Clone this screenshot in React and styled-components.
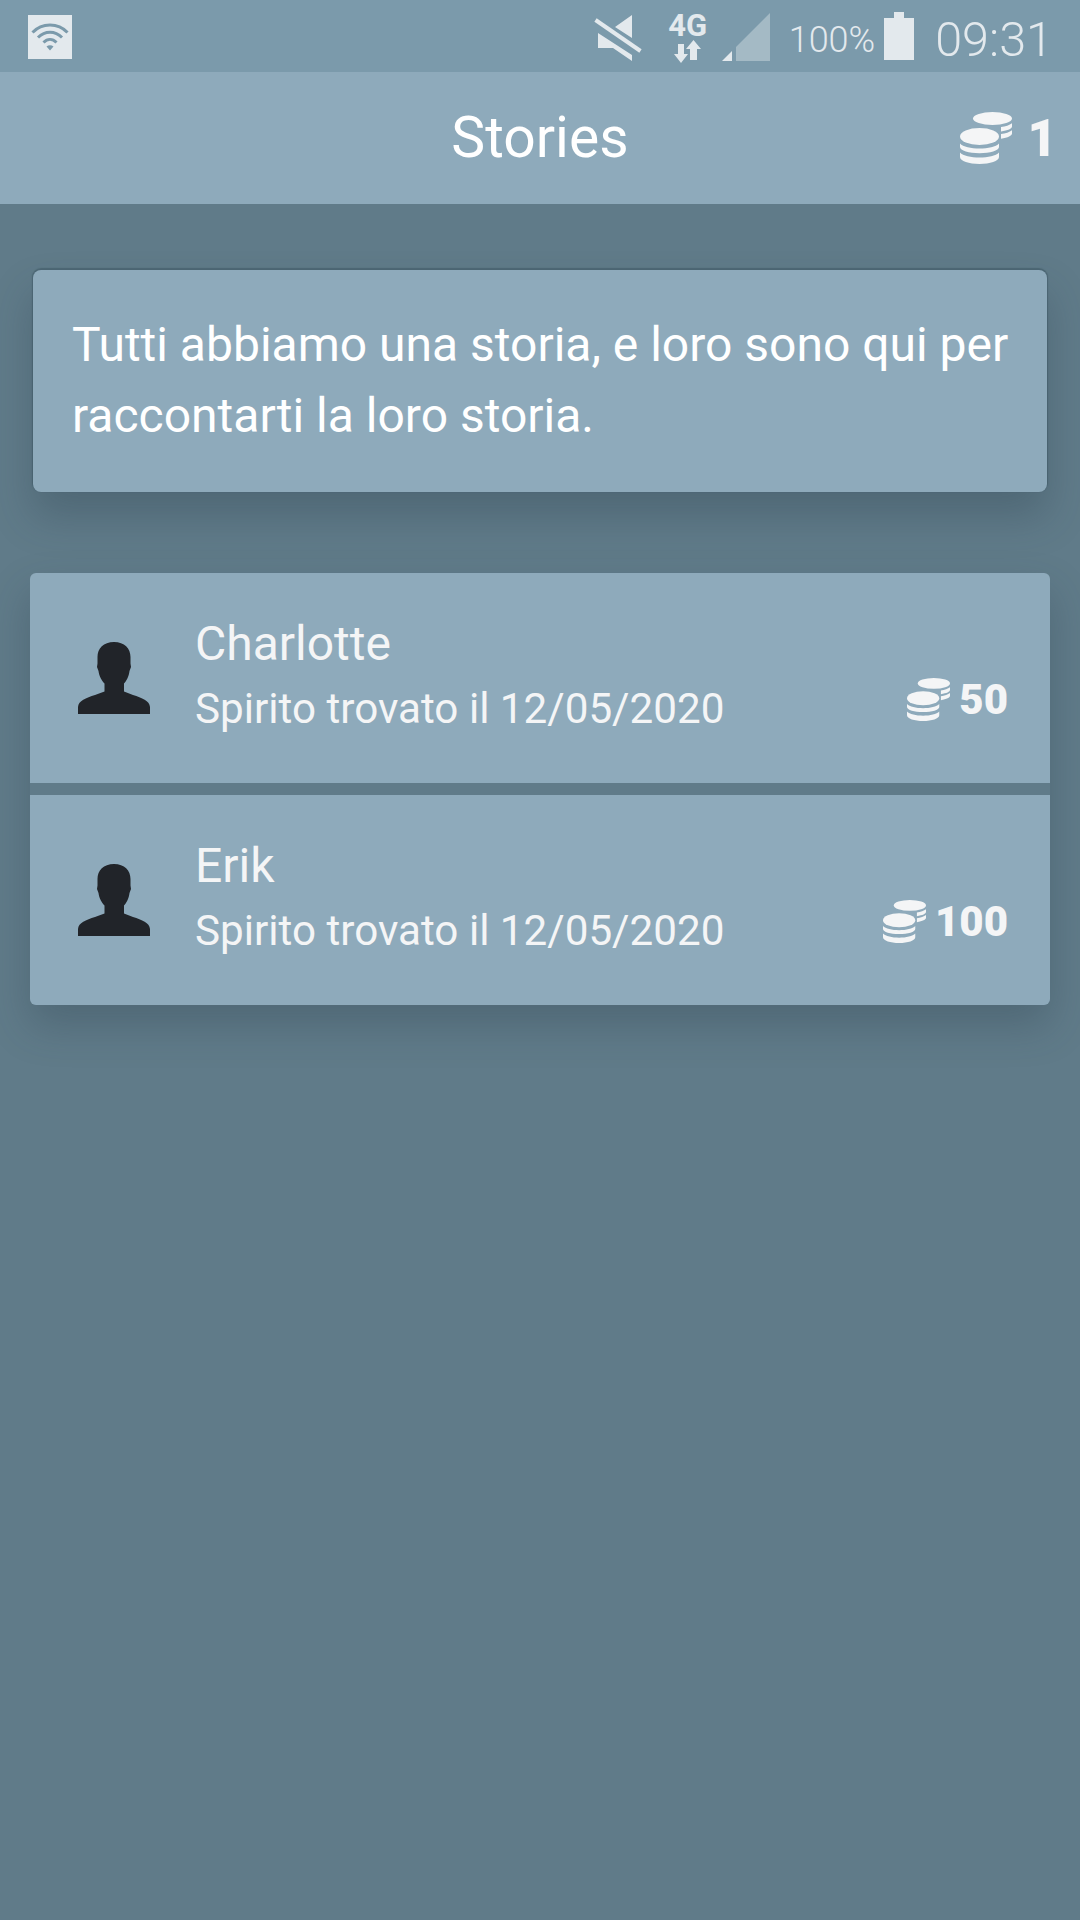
import styled, { createGlobalStyle } from 'styled-components';

const GlobalStyle = createGlobalStyle`
  html, body {
    margin: 0;
    padding: 0;
    background: #607b89;
  }
  * {
    box-sizing: border-box;
  }
`;

const stories = [
  { name: 'Charlotte', found: 'Spirito trovato il 12/05/2020', price: 50 },
  { name: 'Erik', found: 'Spirito trovato il 12/05/2020', price: 100 },
];

const CoinsIcon = ({ size }) => (
  <svg width={size} height={size} viewBox="0 0 52 52" fill="#f4f5f6">
    <ellipse cx="32.500" cy="6.500" rx="19.500" ry="6.500" />
    <path d="M41 15c4.500-.6 8.600-1.800 11-3.800v3.300c0 2-4 4-11 5zM41 22c4.500-.6 8.600-1.800 11-3.800v3.300c0 2-4 4.300-11 5.300z" />
    <ellipse cx="19.500" cy="24.500" rx="19.500" ry="8.500" />
    <path d="M0 31.500c3 3.400 11 5 19.500 5S36 34.900 39 31.500v3.500c0 3.500-9 6.200-19.500 6.200S0 38.500 0 35zM0 40.500c3 3.400 11 5 19.500 5S36 43.900 39 40.500V45c0 4-9 7-19.500 7S0 49 0 45z" />
  </svg>
);

const PersonIcon = () => (
  <svg width="72" height="72" viewBox="0 0 72 72" fill="#212429">
    <path d="M36 0c10.500 0 16.500 6.500 16.500 15v6.500l.5 3.500-1.500 4c-.5 5-3 10-5.500 12.500v8l9 3.500c9 3 16.500 5.500 17 12V72H0v-7c.5-6.500 8-9 17-12l9.500-3.500v-8C24 39 21 34 20.500 29L19 25l.5-3.500V15C19.500 6.500 25.500 0 36 0z" />
  </svg>
);

const WifiIcon = () => (
  <svg width="44" height="44" viewBox="0 0 44 44">
    <rect width="44" height="44" fill="#e3e9ed" />
    <g fill="none" stroke="#7b9aab" strokeWidth="3">
      <path d="M4.500 17.500C14 7.500 30 7.500 39.500 17.500" />
      <path d="M10 22.500c7-7 17-7 24 0" />
      <path d="M15.500 27.500c4-4 9-4 13 0" />
    </g>
    <path d="M18.500 31.500c2-1.700 5-1.700 7 0L22 35.500z" fill="#7b9aab" />
  </svg>
);

const MuteIcon = () => (
  <svg width="48" height="46" viewBox="0 0 48 46" fill="#e3e9ed">
    <path d="M38 0v23L21 12zM4 18l34 22v6L19 33H4z" />
    <path d="M1.500 5l45 31" stroke="#e3e9ed" strokeWidth="4" />
  </svg>
);

const DataIcon = () => (
  <svg width="27" height="23" viewBox="0 0 27 23" fill="#e3e9ed">
    <path d="M4 4h6v10h4L7 23 0 14h4zM16 20V9h-4l7.500-9L27 9h-4v11z" />
  </svg>
);

const SignalIcon = () => (
  <svg width="48" height="48" viewBox="0 0 48 48">
    <path d="M14 48V34L48 0v48z" fill="#a4bac5" />
    <path d="M0 48l10-10v10z" fill="#e3e9ed" />
  </svg>
);

const BatteryIcon = () => (
  <svg width="30" height="48" viewBox="0 0 30 48" fill="#e3e9ed">
    <path d="M10 0h10v6h10v42H0V6h10z" />
  </svg>
);

const App = () => {
  return (
    <>
      <GlobalStyle />
      <Screen>
        <StatusBar>
          <WifiIcon />
          <StatusRight>
            <MuteSlot>
              <MuteIcon />
            </MuteSlot>
            <NetworkSlot>
              <NetworkLabel>4G</NetworkLabel>
              <DataIcon />
            </NetworkSlot>
            <SignalSlot>
              <SignalIcon />
            </SignalSlot>
            <Percent>100%</Percent>
            <BatterySlot>
              <BatteryIcon />
            </BatterySlot>
            <Clock>09:31</Clock>
          </StatusRight>
        </StatusBar>

        <Header>
          <Title>Stories</Title>
          <Balance>
            <CoinsIcon size={52} />
            <BalanceValue>1</BalanceValue>
          </Balance>
        </Header>

        <Content>
          <IntroCard>
            Tutti abbiamo una storia, e loro sono qui per raccontarti la loro storia.
          </IntroCard>

          <StoryList>
            {stories.map((story) => (
              <StoryRow key={story.name}>
                <Avatar>
                  <PersonIcon />
                </Avatar>
                <StoryText>
                  <StoryName>{story.name}</StoryName>
                  <StoryFound>{story.found}</StoryFound>
                </StoryText>
                <Price>
                  <CoinsIcon size={43} />
                  <PriceValue>{story.price}</PriceValue>
                </Price>
              </StoryRow>
            ))}
          </StoryList>
        </Content>
      </Screen>
    </>
  );
};

export default App;

const Screen = styled.div`
  width: 1080px;
  height: 1920px;
  overflow: hidden;
  display: flex;
  flex-direction: column;
  background: #607b89;
  font-family: Roboto, 'Liberation Sans', sans-serif;
`;

const StatusBar = styled.div`
  height: 72px;
  flex-shrink: 0;
  display: flex;
  align-items: flex-start;
  justify-content: space-between;
  padding: 15px 27px 0 28px;
  background: #7b9aab;
  color: #e3e9ed;
`;

const StatusRight = styled.div`
  display: flex;
  align-items: flex-start;
`;

const MuteSlot = styled.div`
  height: 46px;
`;

const NetworkSlot = styled.div`
  width: 40px;
  height: 52px;
  margin: -4px 0 0 26px;
  display: flex;
  flex-direction: column;
  align-items: center;
`;

const NetworkLabel = styled.span`
  font-size: 31px;
  line-height: 29px;
  font-weight: 700;
`;

const SignalSlot = styled.div`
  height: 48px;
  margin: -2px 0 0 14px;
`;

const Percent = styled.span`
  margin: 4px 0 0 19px;
  font-size: 36px;
  line-height: 42px;
  font-weight: 300;
`;

const BatterySlot = styled.div`
  height: 48px;
  margin: -3px 0 0 9px;
`;

const Clock = styled.span`
  margin: -2px 0 0 21px;
  font-size: 48.500px;
  line-height: 54px;
  font-weight: 300;
`;

const Header = styled.header`
  height: 132px;
  flex-shrink: 0;
  display: grid;
  grid-template-columns: minmax(0, 1fr) auto minmax(0, 1fr);
  align-items: center;
  padding: 0 27px;
  background: #8eaabb;
`;

const Title = styled.h1`
  grid-column: 2;
  margin: -2px 0 0;
  color: #fff;
  font-size: 57px;
  font-weight: 400;
`;

const Balance = styled.div`
  grid-column: 3;
  justify-self: end;
  display: flex;
  align-items: center;
  gap: 15px;
  margin-right: -4px;
`;

const BalanceValue = styled.span`
  color: #f4f5f6;
  font-size: 51px;
  font-weight: 900;
`;

const Content = styled.main`
  flex: 1;
  display: flex;
  flex-direction: column;
  padding: 66px 30px 0;
`;

const IntroCard = styled.section`
  margin: 0 3px;
  height: 222px;
  padding: 39px 20px 0 39px;
  border-radius: 8px;
  background: #8eaabb;
  color: #fff;
  font-size: 48px;
  line-height: 71px;
  box-shadow: 0 -1px 1px 1px rgba(60, 85, 98, 0.55), 0 24px 40px rgba(40, 60, 72, 0.3);
`;

const StoryList = styled.section`
  margin-top: 81px;
  display: flex;
  flex-direction: column;
  gap: 12px;
  border-radius: 6px;
  box-shadow: 0 20px 40px rgba(40, 60, 72, 0.3);
`;

const StoryRow = styled.article`
  height: 210px;
  display: flex;
  align-items: center;
  padding: 0 42px 0 48px;
  background: #8eaabb;

  &:first-child {
    border-radius: 6px 6px 0 0;
  }

  &:last-child {
    border-radius: 0 0 6px 6px;
  }
`;

const Avatar = styled.div`
  width: 72px;
  height: 72px;
  flex-shrink: 0;
`;

const StoryText = styled.div`
  flex: 1;
  margin: -8px 0 0 45px;
  display: flex;
  flex-direction: column;
`;

const StoryName = styled.div`
  color: #f4f5f6;
  font-size: 48px;
  line-height: 60px;
`;

const StoryFound = styled.div`
  margin-top: 10px;
  color: #f4f5f6;
  font-size: 42.200px;
  line-height: 50px;
`;

const Price = styled.div`
  display: flex;
  align-items: center;
  gap: 9px;
  margin-top: 43px;
`;

const PriceValue = styled.span`
  color: #f4f5f6;
  font-size: 42px;
  font-weight: 900;
`;
